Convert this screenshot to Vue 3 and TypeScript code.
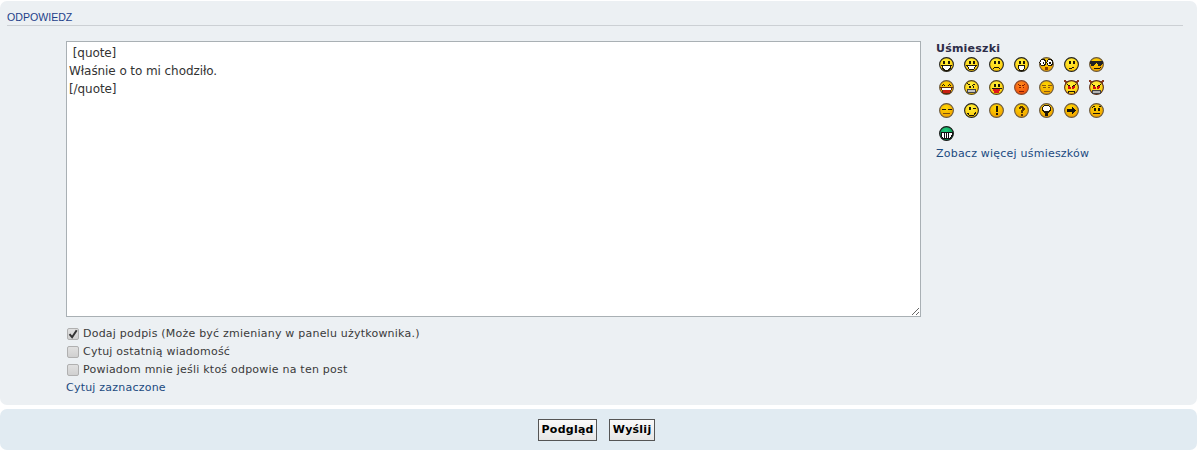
<template>
    <div class="page">
        <section class="panel">
            <h3 class="heading">ODPOWIEDZ</h3>
            <div class="form">
                <textarea class="message" v-model="message" spellcheck="false"></textarea>
                <aside class="smilies">
                    <strong class="smilies_title">Uśmieszki</strong>
                    <div class="smilies_grid">
                        <svg v-for="(s, i) in smilies" :key="s.name" class="smiley" viewBox="0 0 15 15" :aria-label="s.name">
                            <defs>
                                <radialGradient :id="'face' + i" cx="0.45" cy="0.3" r="0.75">
                                    <stop offset="0" :stop-color="s.light" />
                                    <stop offset="1" :stop-color="s.dark" />
                                </radialGradient>
                            </defs>
                            <path v-if="s.horns" d="M0 0l1.500 5 4-3.500zM15 0l-1.500 5-4-3.500z" fill="#8a3a20" />
                            <circle cx="7.5" cy="7.5" r="6.9" :fill="`url(#face${i})`" :stroke="s.line" stroke-width="1.1" />
                            <path v-for="(p, j) in s.parts" :key="j" :d="p.d" :fill="p.fill || 'none'" :stroke="p.stroke || 'none'" stroke-width="1" />
                        </svg>
                    </div>
                    <a class="link">Zobacz więcej uśmieszków</a>
                </aside>
            </div>
            <div class="options">
                <label v-for="opt in options" :key="opt.text" class="option">
                    <span class="check">
                        <input type="checkbox" v-model="opt.checked" />
                        <svg v-if="opt.checked" class="tick" viewBox="0 0 12 12">
                            <path d="M2.5 6.2l2.6 3 4.6-7" fill="none" stroke="#333" stroke-width="2" />
                        </svg>
                    </span>
                    {{ opt.text }}
                </label>
                <a class="link">Cytuj zaznaczone</a>
            </div>
        </section>
        <section class="panel buttons">
            <button class="btn">Podgląd</button>
            <button class="btn">Wyślij</button>
        </section>
    </div>
</template>

<script setup lang="ts">
    import { reactive, ref } from 'vue';

    type Part = { d: string; fill?: string; stroke?: string };
    type Smiley = { name: string; light: string; dark: string; line: string; horns?: boolean; parts: Part[] };

    const message = ref(' [quote]\nWłaśnie o to mi chodziło.\n[/quote]');

    const options = reactive([
        { text: 'Dodaj podpis (Może być zmieniany w panelu użytkownika.)', checked: true },
        { text: 'Cytuj ostatnią wiadomość', checked: false },
        { text: 'Powiadom mnie jeśli ktoś odpowie na ten post', checked: false },
    ]);

    const INK = '#1e1808';
    const yellow = { light: '#fff23c', dark: '#ffc400', line: '#222' };
    const amber = { light: '#ffd800', dark: '#f09c00', line: '#6a5a40' };

    const dotEyes: Part = { d: 'M5 3.500h2v3.500H5zM8.500 3.500h2v3.500h-2z', fill: INK };
    const redEyes: Part = { d: 'M3.500 5l3.500 2v1.500H4.500zM11.500 5L8 7v1.500h2.500z', fill: '#d01010' };

    const smilies: Smiley[] = [
        { name: 'biggrin', ...yellow, parts: [{ d: 'M4 4h2v2.500H4zM9 4h2v2.500H9z', fill: INK }, { d: 'M2.500 8h10l-1.500 3.500L9.500 13h-4L4 11.500z', fill: '#fff', stroke: INK }] },
        { name: 'smile', ...yellow, parts: [dotEyes, { d: 'M3 8.500h9l-2 3.500H5z', fill: '#fff', stroke: INK }] },
        { name: 'sad', ...yellow, parts: [dotEyes, { d: 'M4 12l2-2h3l2 2', stroke: INK }] },
        { name: 'surprised', ...yellow, parts: [dotEyes, { d: 'M4.500 8.500h6v3l-1 1.500h-4l-1-1.500z', fill: '#fff', stroke: INK }] },
        { name: 'eek', ...amber, parts: [
            { d: 'M1 5.500a3 3 0 1 0 6 0a3 3 0 1 0-6 0zM8 5.500a3 3 0 1 0 6 0a3 3 0 1 0-6 0z', fill: '#fff', stroke: INK },
            { d: 'M3.500 4.500h1.500v2H3.500zM10 4.500h1.500v2H10z', fill: INK },
            { d: 'M6 10h3v3H6z', fill: '#8a4200' },
        ] },
        { name: 'confused', ...yellow, parts: [dotEyes, { d: 'M5 11h3l2-1', stroke: INK }] },
        { name: 'cool', ...amber, parts: [
            { d: 'M1 4h13v2l-1.500 2.500h-3L8 6H7L5.500 8.500h-3L1 6z', fill: '#222' },
            { d: 'M4.500 11.500h6l1.500-1', stroke: INK },
        ] },

        { name: 'lol', ...amber, parts: [{ d: 'M3 6l1.500-1.500L6 6M9 6l1.500-1.500L12 6', stroke: INK }, { d: 'M2 7.500h11l-2 5.500H4z', fill: '#c82010', stroke: '#5a2c10' }, { d: 'M3 8h9v1.500H3z', fill: '#fff' }] },
        { name: 'mad', ...yellow, line: '#5a4a20', parts: [
            { d: 'M3.500 3.500l3 2M11.500 3.500l-3 2', stroke: INK }, { d: 'M5 6h1.500v2H5zM8.500 6H10v2H8.500z', fill: INK },
            { d: 'M3.500 9.500h8v3h-8z', fill: '#c4c4c4', stroke: '#444' },
        ] },
        { name: 'razz', ...yellow, line: '#5a4a20', parts: [dotEyes, { d: 'M2.500 8.500h10', stroke: INK }, { d: 'M4 9h7l-1 4H5z', fill: '#e01818' }] },
        { name: 'redface', light: '#ff8c1c', dark: '#ec4608', line: '#8a4a2c', parts: [{ d: 'M4 4.500l2.500 1.500M11 4.500L8.500 6', stroke: '#8a1a00' }, { d: 'M5 6.500h1.500V8H5zM8.500 6.500H10V8H8.500z', fill: '#8a1a00' }, { d: 'M5 11h5', stroke: '#8a1a00' }] },
        { name: 'neutral-closed', ...amber, parts: [{ d: 'M2.500 5.500h4M8.500 5.500h4', stroke: '#8a5a10' }, { d: 'M4 7h2.500M8.500 7H11', stroke: '#8a5a10' }, { d: 'M4.500 11h6', stroke: '#8a5a10' }] },
        { name: 'evil', ...yellow, line: '#5a3020', horns: true, parts: [redEyes, { d: 'M3 4.500l3.500 2M12 4.500l-3.500 2', stroke: INK }, { d: 'M4 12.500l1-1.500h5l1 1.500', stroke: INK }] },
        { name: 'twisted', ...yellow, line: '#5a3020', horns: true, parts: [redEyes, { d: 'M3 4.500l3.500 2M12 4.500l-3.500 2', stroke: INK }, { d: 'M3.500 10h8v3h-8z', fill: '#b4b4b4', stroke: '#444' }] },

        { name: 'closed', ...amber, parts: [{ d: 'M2.500 6h4M8.500 6h4', stroke: INK }, { d: 'M4 10.500h7', stroke: '#7a5010' }] },
        { name: 'wink', ...yellow, parts: [{ d: 'M5 3.500h2V7H5z', fill: INK }, { d: 'M8.500 5.500h3', stroke: INK }, { d: 'M3.500 10l2 2.500h4L12 9', stroke: INK }] },
        { name: 'exclaim', ...amber, parts: [{ d: 'M6.500 3h2v6h-2zM6.500 10h2v2h-2z', fill: INK }] },
        { name: 'question', ...amber, parts: [{ d: 'M4.500 5l1.500-2h3l1.500 2v1.500L8.500 8.500v1h-2V7.500L8 6V5H7L6.500 6h-2zM6.500 10.500h2V12.500h-2z', fill: '#5a3500' }] },
        { name: 'idea', ...amber, parts: [
            { d: 'M3.500 6a4 4 0 1 1 8 0q0 1.500-2 3h-4q-2-1.500-2-3z', fill: '#fff', stroke: INK },
            { d: 'M6 8h3v5H6z', fill: INK },
        ] },
        { name: 'arrow', ...amber, parts: [{ d: 'M2.500 6h5V3l5 4.500-5 4.500V9h-5z', fill: '#111' }] },
        { name: 'neutral', ...amber, parts: [{ d: 'M3.500 4.500l2-1.500M9.500 3.500h2', stroke: INK }, { d: 'M5 5h1.500v2.500H5zM9 5h1.500v2.500H9z', fill: INK }, { d: 'M4 10.500h7', stroke: INK }] },

        { name: 'mrgreen', light: '#1fd080', dark: '#088040', line: '#1a1a1a', parts: [
            { d: 'M2 6.500h11v3L11 12.500H4l-2-3z', fill: '#fff', stroke: '#111' },
            { d: 'M5.500 7v5M7.500 7v5M9.500 7v5', stroke: '#111' },
        ] },
    ];
</script>

<style scoped>
    .page {
        width: 1197px;
        padding-top: 1px;
        font-family: "DejaVu Sans", Verdana, sans-serif;
        font-size: 11px;
        letter-spacing: 0.22px;
        color: #3a3a3a;
    }
    .panel {
        box-sizing: border-box;
        height: 404px;
        padding: 10px 7px 0;
        border-radius: 7px;
        background: #ecf0f3;
    }
    .heading {
        margin: 0 7px 0 0;
        padding-bottom: 3px;
        height: 11px;
        border-bottom: 1px solid #ccd0d4;
        font-family: "Liberation Sans", Arial, sans-serif;
        font-size: 10.6px;
        line-height: 13px;
        letter-spacing: 0;
        font-weight: normal;
        color: #1c3f8a;
    }
    .form {
        display: flex;
        gap: 15px;
        margin: 15px 0 0 59px;
    }
    .message {
        box-sizing: border-box;
        width: 855px;
        height: 276px;
        margin: 0;
        padding: 2px;
        border: 1px solid #a9b0b4;
        background: #fff;
        font-family: "DejaVu Sans", Verdana, sans-serif;
        font-size: 12px;
        line-height: 18px;
        letter-spacing: -0.08px;
        color: #333;
        outline: none;
    }
    .smilies {
        display: flex;
        flex-direction: column;
        align-items: flex-start;
        padding-top: 1px;
    }
    .smilies_title {
        line-height: 14px;
        color: #2c2c48;
    }
    .smilies_grid {
        display: grid;
        grid-template-columns: repeat(7, 15px);
        grid-auto-rows: 15px;
        column-gap: 10px;
        row-gap: 8px;
        margin: 1px 0 0 3px;
    }
    .smiley {
        display: block;
        width: 15px;
        height: 15px;
        shape-rendering: crispEdges;
    }
    .smiley circle {
        shape-rendering: auto;
    }
    .link {
        line-height: 14px;
        color: #1b4a80;
    }
    .smilies .link {
        margin-top: 6px;
    }
    .options {
        display: flex;
        flex-direction: column;
        align-items: flex-start;
        gap: 4px;
        margin: 10px 0 0 59px;
    }
    .option {
        display: flex;
        align-items: center;
        gap: 4px;
        line-height: 14px;
    }
    .check {
        position: relative;
        display: block;
        width: 12px;
        height: 12px;
        margin-left: 1px;
    }
    .check input {
        appearance: none;
        display: block;
        box-sizing: border-box;
        width: 12px;
        height: 12px;
        margin: 0;
        border: 1px solid #b0b0b0;
        border-radius: 2px;
        background: linear-gradient(#e0e0e0, #d0d0d0);
    }
    .tick {
        position: absolute;
        top: 0;
        left: 0;
        width: 12px;
        height: 12px;
    }
    .buttons {
        display: flex;
        justify-content: center;
        align-items: center;
        gap: 12px;
        height: 41px;
        margin-top: 4px;
        padding: 0 4px 0 0;
        background: #e1ebf2;
    }
    .btn {
        box-sizing: border-box;
        height: 22px;
        padding: 0 2.5px;
        border: 1px solid #555;
        background: linear-gradient(#fafafa, #e6e6e6);
        font-family: "DejaVu Sans", Verdana, sans-serif;
        font-size: 11px;
        font-weight: bold;
        letter-spacing: 0.25px;
        color: #000;
    }
</style>

<style>
    html, body {
        background: #fff;
    }
</style>
